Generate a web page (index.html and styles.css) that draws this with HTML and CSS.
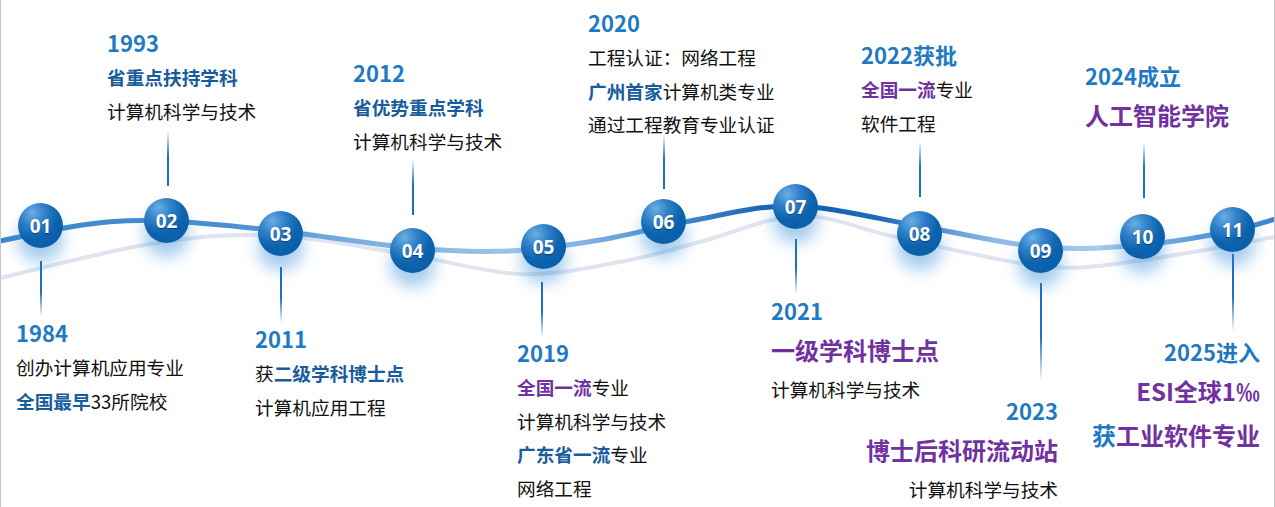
FILE: index.html
```html
<!DOCTYPE html>
<html lang="zh-CN">
<head>
<meta charset="utf-8">
<title>发展历程</title>
<link rel="stylesheet" href="styles.css">
</head>
<body>
<div class="stage">
  <svg class="curves" width="1275" height="507" viewBox="0 0 1275 507">
    <defs>
      <linearGradient id="mainGrad" gradientUnits="userSpaceOnUse" x1="0" y1="0" x2="1275" y2="0">
        <stop offset="0" stop-color="#3f87cc"/>
        <stop offset="0.18" stop-color="#4a8fd0"/>
        <stop offset="0.3" stop-color="#82b3e0"/>
        <stop offset="0.42" stop-color="#a2c6e9"/>
        <stop offset="0.52" stop-color="#4d8fd2"/>
        <stop offset="0.62" stop-color="#0b5cab"/>
        <stop offset="0.69" stop-color="#1f6cba"/>
        <stop offset="0.78" stop-color="#8cbae4"/>
        <stop offset="0.86" stop-color="#a6caeb"/>
        <stop offset="0.94" stop-color="#5d9bd8"/>
        <stop offset="1" stop-color="#3c84cc"/>
      </linearGradient>
    </defs>
    <path class="wave-back" d="M0,278 C35,270 105,251.2 150,244 C195,236.8 228.3,233.5 270,235 C311.7,236.5 358.3,246.5 400,253 C441.7,259.5 483.3,272.5 520,274 C556.7,275.5 590,267.3 620,262 C650,256.7 670,249.7 700,242 C730,234.3 766.7,216.7 800,216 C833.3,215.3 860,229.7 900,238 C940,246.3 1001.7,262 1040,266 C1078.3,270 1090.8,266.8 1130,262 C1169.2,257.2 1240,243.3 1275,237"/>
    <path class="wave-main" d="M0,241 C23.3,236.3 62.3,227.3 90,224 C117.7,220.7 134.3,219.8 166,221 C197.7,222.2 239,226.5 280,231 C321,235.5 373.7,244.7 412,248 C450.3,251.3 478.7,252.3 510,251 C541.3,249.7 570,245 600,240 C630,235 657.5,226.7 690,221 C722.5,215.3 756.8,205.2 795,206 C833.2,206.8 878.2,219.2 919,226 C959.8,232.8 1002.8,243.8 1040,247 C1077.2,250.2 1110,247.7 1142,245 C1174,242.3 1209.8,235.3 1232,231 C1254.2,226.7 1260.3,223.3 1275,219"/>
  </svg>

  <div class="conn down c01"></div>
  <div class="conn up c02"></div>
  <div class="conn down c03"></div>
  <div class="conn up c04"></div>
  <div class="conn down c05"></div>
  <div class="conn up c06"></div>
  <div class="conn down c07"></div>
  <div class="conn up c08"></div>
  <div class="conn down c09"></div>
  <div class="conn up c10"></div>
  <div class="conn down c11"></div>

  <div class="node n01">01</div>
  <div class="node n02">02</div>
  <div class="node n03">03</div>
  <div class="node n04">04</div>
  <div class="node n05">05</div>
  <div class="node n06">06</div>
  <div class="node n07">07</div>
  <div class="node n08">08</div>
  <div class="node n09">09</div>
  <div class="node n10">10</div>
  <div class="node n11">11</div>

  <div class="label l1993">
    <div class="year">1993</div>
    <div class="line"><b class="db">省重点扶持学科</b></div>
    <div class="line">计算机科学与技术</div>
  </div>

  <div class="label l2012">
    <div class="year">2012</div>
    <div class="line"><b class="db">省优势重点学科</b></div>
    <div class="line">计算机科学与技术</div>
  </div>

  <div class="label l2020">
    <div class="year">2020</div>
    <div class="line">工程认证：网络工程</div>
    <div class="line"><b class="db">广州首家</b>计算机类专业</div>
    <div class="line">通过工程教育专业认证</div>
  </div>

  <div class="label l2022">
    <div class="year">2022获批</div>
    <div class="line"><b class="pp">全国一流</b>专业</div>
    <div class="line">软件工程</div>
  </div>

  <div class="label l2024">
    <div class="year">2024成立</div>
    <div class="big">人工智能学院</div>
  </div>

  <div class="label l1984">
    <div class="year">1984</div>
    <div class="line">创办计算机应用专业</div>
    <div class="line"><b class="db">全国最早</b>33所院校</div>
  </div>

  <div class="label l2011">
    <div class="year">2011</div>
    <div class="line">获<b class="db">二级学科博士点</b></div>
    <div class="line">计算机应用工程</div>
  </div>

  <div class="label l2019">
    <div class="year">2019</div>
    <div class="line"><b class="pp">全国一流</b>专业</div>
    <div class="line">计算机科学与技术</div>
    <div class="line"><b class="db">广东省一流</b>专业</div>
    <div class="line">网络工程</div>
  </div>

  <div class="label l2021">
    <div class="year">2021</div>
    <div class="big">一级学科博士点</div>
    <div class="line">计算机科学与技术</div>
  </div>

  <div class="label right l2023">
    <div class="year">2023</div>
    <div class="big">博士后科研流动站</div>
    <div class="line">计算机科学与技术</div>
  </div>

  <div class="label right l2025">
    <div class="year">2025进入</div>
    <div class="big">ESI全球1‰</div>
    <div class="big"><span class="yb">获</span>工业软件专业</div>
  </div>
</div>
</body>
</html>
```

FILE: styles.css
```css
* { box-sizing: border-box; }

html, body {
  margin: 0;
  padding: 0;
  background: #ffffff;
}

body {
  font-family: "Noto Sans CJK SC", "Noto Sans", sans-serif;
  color: #111111;
}

.stage {
  position: relative;
  width: 1275px;
  height: 507px;
  overflow: hidden;
  border-left: 1px solid #c6c6c6;
  border-right: 1px solid #c6c6c6;
}

.curves {
  position: absolute;
  left: -1px;
  top: 0;
}

.wave-back {
  fill: none;
  stroke: #dfe4ef;
  stroke-width: 4;
}

.wave-main {
  fill: none;
  stroke: url(#mainGrad);
  stroke-width: 5;
  stroke-linecap: round;
}

/* connector stems */
.conn {
  position: absolute;
  width: 2px;
  margin-left: -2px;
}
.conn.up {
  background: linear-gradient(to bottom, rgba(40, 120, 200, 0.05), #1e70c0 45%, #1a6cbd);
}
.conn.down {
  background: linear-gradient(to top, rgba(40, 120, 200, 0.05), #1e70c0 45%, #1a6cbd);
}
.c01 { left: 41px; top: 261px; height: 55px; }
.c02 { left: 168px; top: 132px; height: 54px; }
.c03 { left: 281px; top: 267px; height: 55px; }
.c04 { left: 413px; top: 160px; height: 55px; }
.c05 { left: 542px; top: 282px; height: 54px; }
.c06 { left: 664px; top: 135px; height: 54px; }
.c07 { left: 796px; top: 239px; height: 54px; }
.c08 { left: 920px; top: 142px; height: 55px; }
.c09 { left: 1041px; top: 283px; height: 97px; }
.c10 { left: 1144px; top: 143px; height: 55px; }
.c11 { left: 1233px; top: 254px; height: 76px; }

/* numbered nodes */
.node {
  position: absolute;
  width: 45px;
  height: 45px;
  border-radius: 50%;
  display: flex;
  align-items: center;
  justify-content: center;
  font-family: "Open Sans", "Noto Sans", sans-serif;
  font-weight: 700;
  font-size: 19px;
  color: #ffffff;
  text-shadow: 0 1px 1px rgba(0, 30, 80, 0.6);
  background: radial-gradient(circle at 32% 22%, #6aaee3 0%, #2f80c8 28%, #0c63ae 55%, #0a5ba5 100%);
  box-shadow: 0 14px 16px rgba(50, 140, 215, 0.45);
}
.n01 { left: 17px; top: 203px; }
.n02 { left: 143px; top: 198px; }
.n03 { left: 257px; top: 211px; }
.n04 { left: 389px; top: 228px; }
.n05 { left: 520px; top: 224px; }
.n06 { left: 640px; top: 199px; }
.n07 { left: 772px; top: 184px; }
.n08 { left: 896px; top: 211px; }
.n09 { left: 1017px; top: 228px; }
.n10 { left: 1119px; top: 214px; }
.n11 { left: 1209px; top: 207px; }

/* labels */
.label {
  position: absolute;
  white-space: nowrap;
}
.label.right {
  text-align: right;
}

.year {
  font-size: 22px;
  line-height: 36px;
  font-weight: 700;
  color: #1f7ac3;
}

.line {
  font-size: 18.67px;
  line-height: 33.5px;
  color: #111111;
}

.big {
  font-size: 24px;
  line-height: 44px;
  font-weight: 700;
  color: #7131a1;
}

.db {
  font-weight: 700;
  color: #185c9c;
}
.pp {
  font-weight: 700;
  color: #7131a1;
}
.yb {
  color: #1f7ac3;
}

.l1993 { left: 106px; top: 24px; }
.l2012 { left: 352px; top: 54px; }
.l2020 { left: 587px; top: 4px; }
.l2022 { left: 860px; top: 36px; }
.l2024 { left: 1084px; top: 57px; }
.l1984 { left: 15px; top: 314px; }
.l2011 { left: 254px; top: 320px; }
.l2019 { left: 516px; top: 334px; }
.l2021 { left: 770px; top: 292px; }
.l2023 { right: 216px; top: 392px; }
.l2025 { right: 14px; top: 333px; }
```
